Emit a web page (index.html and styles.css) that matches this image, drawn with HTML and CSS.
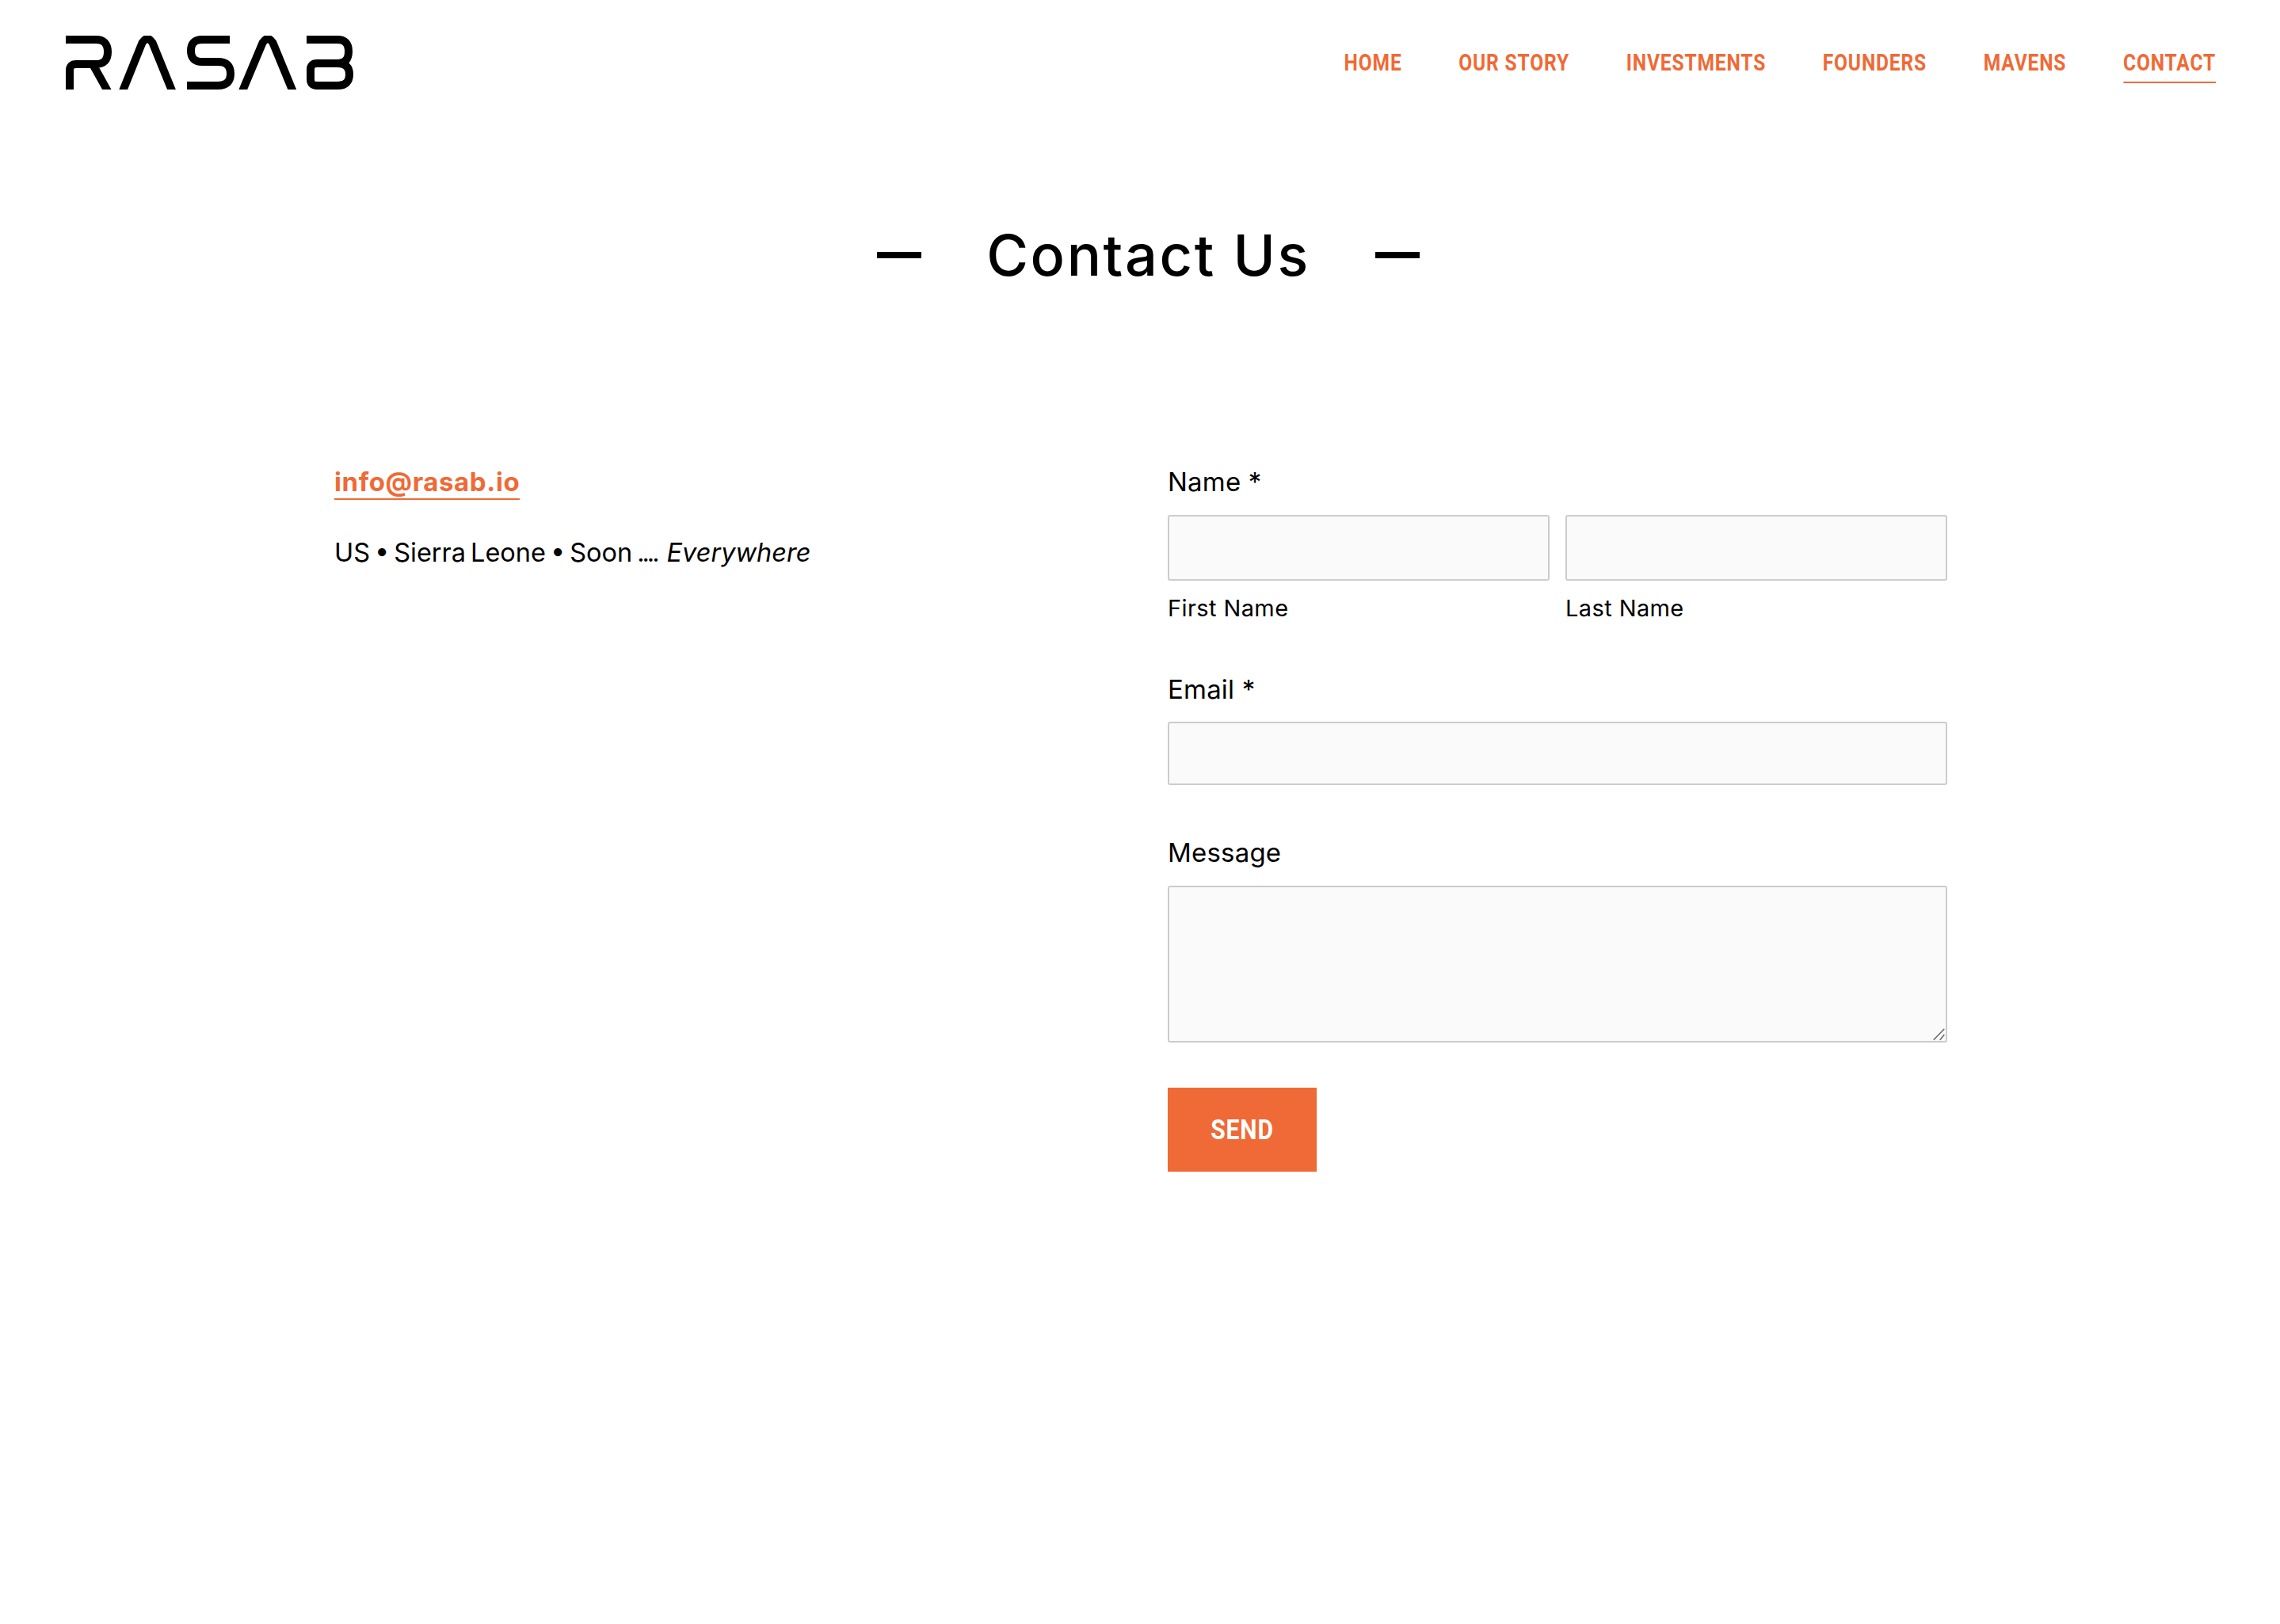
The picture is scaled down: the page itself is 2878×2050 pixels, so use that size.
FILE: index.html
```html
<!DOCTYPE html>
<html lang="en">
<head>
<meta charset="utf-8">
<title>Contact Us — RASAB</title>
<link rel="stylesheet" href="styles.css">
</head>
<body>
<header class="site-header">
  <a class="logo" href="#" aria-label="RASAB">
    <svg class="logo-mark" viewBox="0 0 363 68" width="363" height="68" fill="none" stroke="#000" stroke-width="10">
      <path d="M0 5H38Q53 5 53 20.500Q53 36 38 36H13Q5 36 5 44V72M34 36L53.500 71"/>
      <path d="M71.500 71L96.500 9Q103 -1 109.500 9L134.700 71"/>
      <path d="M207 5H172Q158 5 158 19Q158 33 172 33H192Q208 33 208 48Q208 63 192 63H153"/>
      <path d="M222.500 71L248.500 9Q255 -1 261.500 9L287 71"/>
      <path d="M304 5H343Q357 5 357 20Q357 35 343 35H317Q309 35 309 43V55Q309 63 317 63H343Q358 63 358 49Q358 35 343 35"/>
    </svg>
  </a>
  <nav class="nav">
    <a href="#">HOME</a>
    <a href="#">OUR STORY</a>
    <a href="#">INVESTMENTS</a>
    <a href="#">FOUNDERS</a>
    <a href="#">MAVENS</a>
    <a href="#" class="active">CONTACT</a>
  </nav>
</header>
<main>
  <h1 class="title">Contact Us</h1>
  <section class="contact">
    <div class="info">
      <p class="mail"><a href="#">info@rasab.io</a></p>
      <p class="places">US • Sierra Leone • Soon <span class="dots">....</span> <em>Everywhere</em></p>
    </div>
    <form class="form">
      <div class="group name-group">
        <div class="label">Name *</div>
        <div class="pair">
          <label class="sub"><input type="text"><span>First Name</span></label>
          <label class="sub"><input type="text"><span>Last Name</span></label>
        </div>
      </div>
      <div class="group email-group">
        <div class="label">Email *</div>
        <input type="text" class="email">
      </div>
      <div class="group message-group">
        <div class="label">Message</div>
        <div class="message-wrap">
          <textarea class="message"></textarea>
          <svg class="grip" viewBox="0 0 16 16" width="16" height="16" fill="none" stroke="#666" stroke-width="1.500">
            <path d="M.7 14.700L14.300 .7M8.700 14.700L14.300 8"/>
          </svg>
        </div>
      </div>
      <button type="button" class="send"><span>SEND</span></button>
    </form>
  </section>
</main>
</body>
</html>
```
FILE: styles.css
```css
* { box-sizing: border-box; }
html, body { margin: 0; background: #fff; }
body { min-height: 2050px; color: #000; font-family: "Inter", "Liberation Sans", sans-serif; }
a { color: inherit; text-decoration: none; }

.site-header { display: flex; justify-content: space-between; align-items: center; height: 158px; padding: 0 81px 0 83px; }
.logo { display: block; height: 68px; }
.logo-mark { display: block; }
.nav { display: flex; gap: 86px; font-family: "Roboto", sans-serif; font-weight: 700; font-size: 29.500px; line-height: 34px; letter-spacing: 1px; color: #ef6a36; transform: scaleX(.833); transform-origin: right center; }
.nav a { display: block; padding-bottom: 7px; border-bottom: 2px solid transparent; margin-top: 9px; white-space: nowrap; }
.nav a.active { border-bottom-color: #ef6a36; }

.title { display: flex; justify-content: center; align-items: center; gap: 82px; margin: 120px 0 0 21px; height: 88px; font-size: 72px; line-height: 88px; font-weight: 500; letter-spacing: 2.600px; }
.title::before, .title::after { content: ""; width: 56px; height: 8px; background: #000; }

.contact { display: grid; grid-template-columns: 1052px 984px; padding: 0 0 0 422px; margin-top: 220px; }
.mail { margin: 0; font-size: 33px; line-height: 44px; font-weight: 700; color: #ef6a36; letter-spacing: .6px; }
.mail a { display: inline-block; line-height: 41px; border-bottom: 2px solid #ef6a36; }
.places { margin: 45px 0 0; font-size: 32.500px; line-height: 44px; word-spacing: -3.200px; }
.dots { letter-spacing: -3px; margin-right: 6px; }
.places em { letter-spacing: 0; }

.label { font-size: 33px; line-height: 44px; letter-spacing: .2px; }
.pair { display: grid; grid-template-columns: 482px 482px; gap: 20px; margin-top: 20px; }
.sub { display: block; }
.sub span { display: block; margin-top: 15px; font-size: 29px; line-height: 40px; letter-spacing: .4px; }
input, textarea { display: block; width: 100%; margin: 0; background: #fafafa; border: 2px solid #ccc; border-radius: 3px; font: inherit; }
.sub input { height: 83px; }
.email-group { margin-top: 60px; }
.email { height: 80px; margin-top: 19px; }
.message-group { margin-top: 63px; }
.message-wrap { position: relative; margin-top: 20px; }
.message { height: 198px; resize: none; }
.grip { position: absolute; right: 2px; bottom: 2px; pointer-events: none; }
.send { display: block; width: 188px; height: 106px; margin-top: 57px; padding: 0; background: #ef6a36; color: #fff; border: 0; font-family: "Roboto", sans-serif; font-size: 35px; font-weight: 700; letter-spacing: 1px; }
.send span { display: block; transform: scaleX(.86); }
```
